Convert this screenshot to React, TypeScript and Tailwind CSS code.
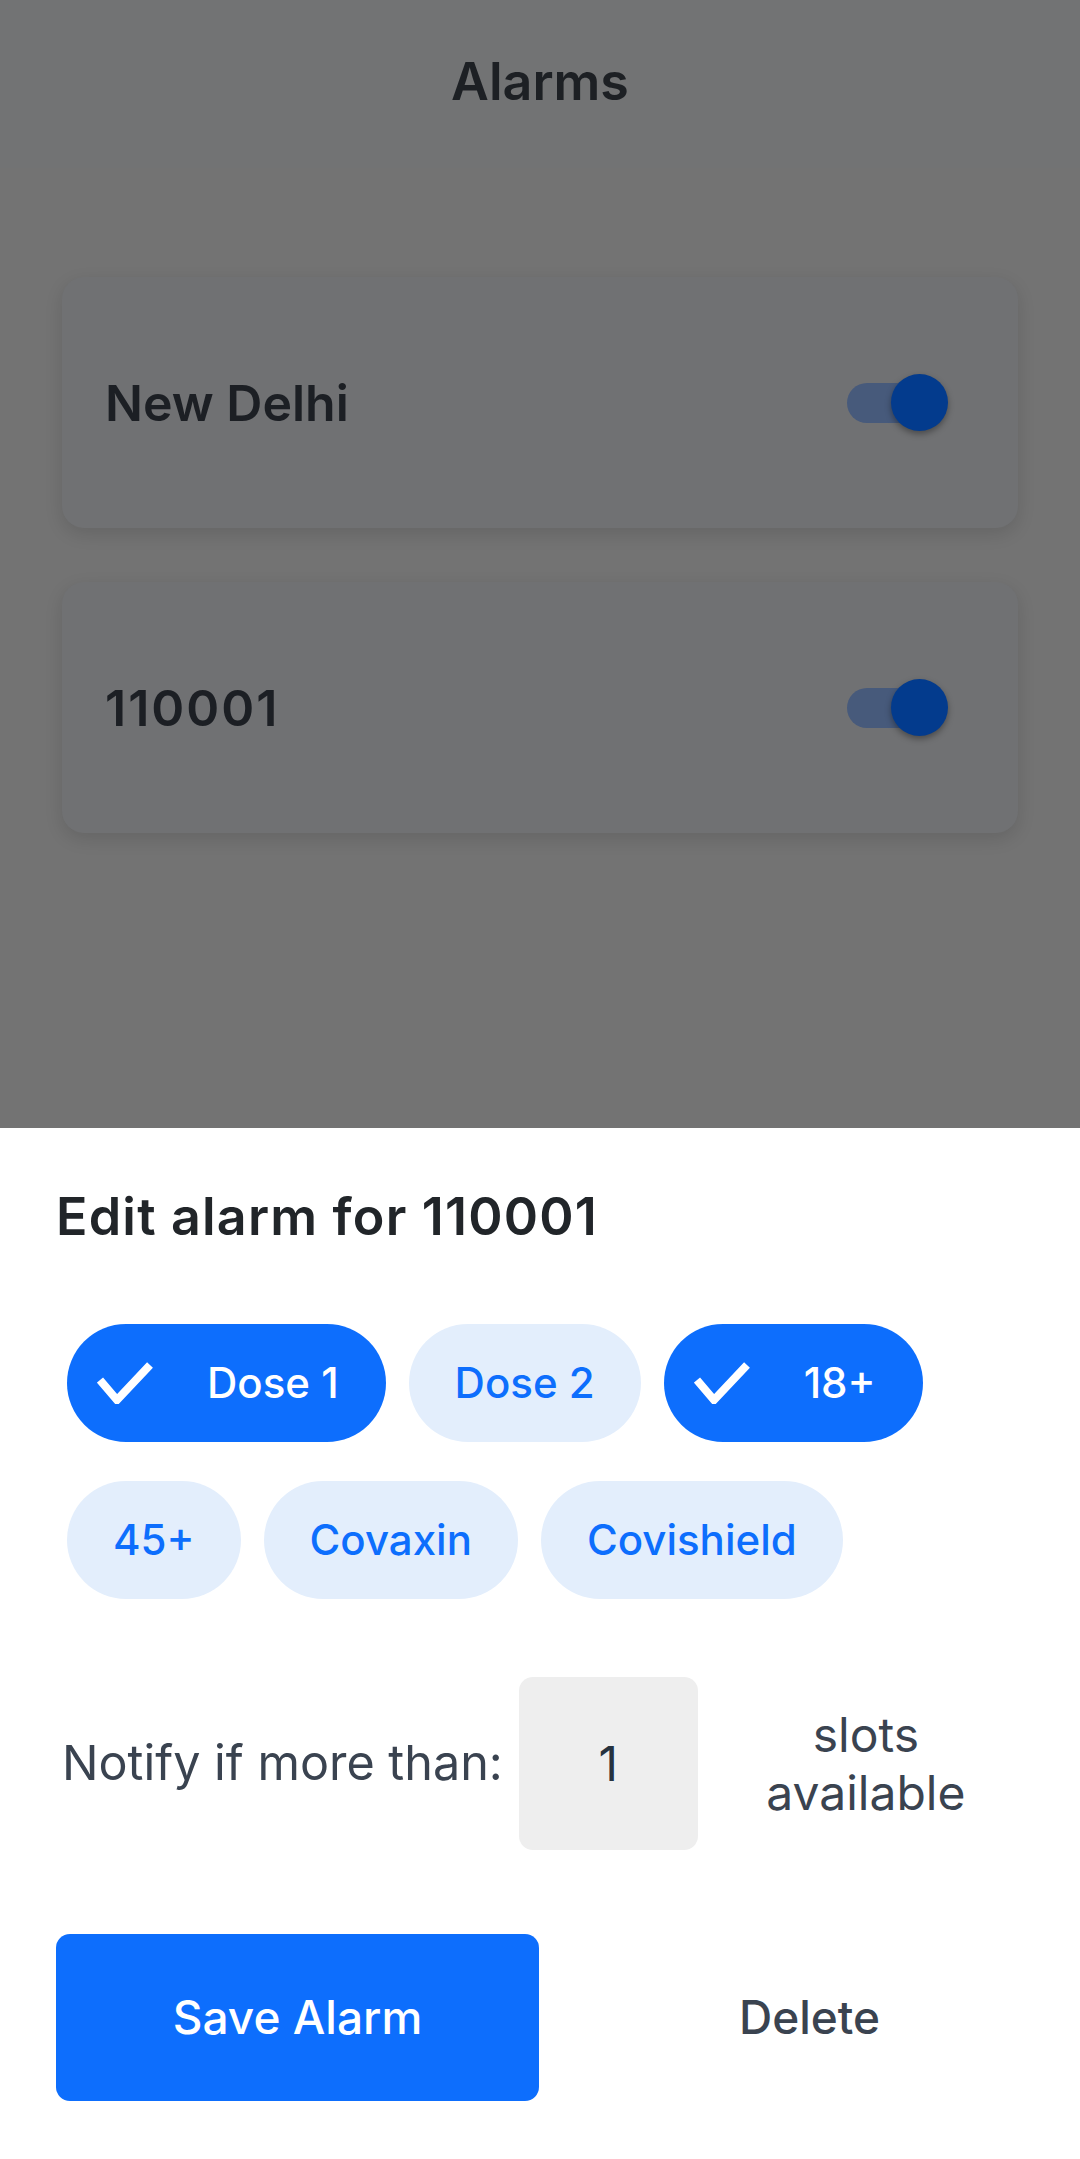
import { useState } from 'react'

const alarms = [
  { id: 1, label: 'New Delhi', on: true, digits: false },
  { id: 2, label: '110001', on: true, digits: true },
]

const initialChips = [
  { id: 'd1', label: 'Dose 1', selected: true },
  { id: 'd2', label: 'Dose 2', selected: false },
  { id: 'a18', label: '18+', selected: true },
  { id: 'a45', label: '45+', selected: false },
  { id: 'cvx', label: 'Covaxin', selected: false },
  { id: 'cvs', label: 'Covishield', selected: false },
]

function Toggle({ on }: { on: boolean }) {
  return (
    <div className="relative w-[101px] h-[57px] shrink-0">
      <div className="absolute left-0 top-[9px] w-[88px] h-[40px] rounded-full bg-[#475a7b]" />
      <div
        className={`absolute top-0 w-[57px] h-[57px] rounded-full bg-[#033b8d] shadow-[0_3px_6px_rgba(0,0,0,0.35)] ${on ? 'right-0' : 'left-0'}`}
      />
    </div>
  )
}

function CheckIcon() {
  return (
    <svg width="56" height="42" viewBox="0 0 56 42" className="shrink-0">
      <polyline points="3,18 20,38 53,3" fill="none" stroke="white" strokeWidth="8" strokeLinecap="butt" strokeLinejoin="miter" />
    </svg>
  )
}

export default function App() {
  const [chips, setChips] = useState(initialChips)
  const [count, setCount] = useState('1')

  const toggleChip = (id: string) =>
    setChips(cs => cs.map(c => (c.id === id ? { ...c, selected: !c.selected } : c)))

  return (
    <div className="w-[1080px] h-[2159px] flex flex-col overflow-hidden font-['Inter',sans-serif]">

      {/* Dimmed list page behind the sheet */}
      <div className="h-[1128px] shrink-0 bg-[#737373] flex flex-col">
        <header className="h-[168px] shrink-0 bg-[#727374] flex items-center justify-center pb-[4px]">
          <h1 className="text-[52px] leading-none font-semibold text-[#1d2024]">Alarms</h1>
        </header>

        <div className="flex flex-col gap-[54px] pt-[109px] px-[62px]">
          {alarms.map(a => (
            <div
              key={a.id}
              className="h-[251px] rounded-[22px] bg-[#707173] shadow-[0_6px_18px_rgba(0,0,0,0.12)] flex items-center justify-between pl-[43px] pr-[70px]"
            >
              <span
                className={`text-[50px] leading-none font-semibold text-[#1c1f24] ${a.digits ? 'tracking-[2px]' : ''}`}
              >
                {a.label}
              </span>
              <Toggle on={a.on} />
            </div>
          ))}
        </div>
      </div>

      {/* Bottom sheet */}
      <div className="flex-1 bg-white flex flex-col">
        <h2 className="mt-[63px] ml-[56px] text-[52px] leading-none font-semibold tracking-[1.2px] text-[#212529]">
          Edit alarm for 110001
        </h2>

        <div className="mt-[81px] ml-[67px] w-[957px] flex flex-wrap gap-x-[23px] gap-y-[39px]">
          {chips.map(c => (
            <button
              key={c.id}
              onClick={() => toggleChip(c.id)}
              className={
                c.selected
                  ? 'h-[118px] rounded-full bg-[#0d6efd] text-white flex items-center pl-[30px] pr-[47px] gap-[54px]'
                  : 'h-[118px] rounded-full bg-[#e3eefc] text-[#0d6efd] flex items-center px-[46px]'
              }
            >
              {c.selected && <CheckIcon />}
              <span className="text-[42px] leading-none font-medium">{c.label}</span>
            </button>
          ))}
        </div>

        <div className="mt-[78px] ml-[62px] mr-[46px] flex items-center">
          <span className="text-[48.5px] leading-none text-[#3a4350]">Notify if more than:</span>
          <input
            value={count}
            onChange={e => setCount(e.target.value)}
            className="ml-[16px] w-[179px] h-[173px] rounded-[14px] bg-[#eeeeee] text-center text-[48px] text-[#26323e] outline-none"
          />
          <span className="flex-1 text-center text-[48px] leading-[58px] text-[#3a4350]">
            slots
            <br />
            available
          </span>
        </div>

        <div className="mt-[84px] ml-[56px] flex items-center">
          <button className="w-[483px] h-[167px] rounded-[14px] bg-[#0d6efd] text-white text-[46px] font-medium">
            Save Alarm
          </button>
          <button className="flex-1 h-[167px] text-[46px] font-medium text-[#3a4350]">Delete</button>
        </div>
      </div>
    </div>
  )
}
